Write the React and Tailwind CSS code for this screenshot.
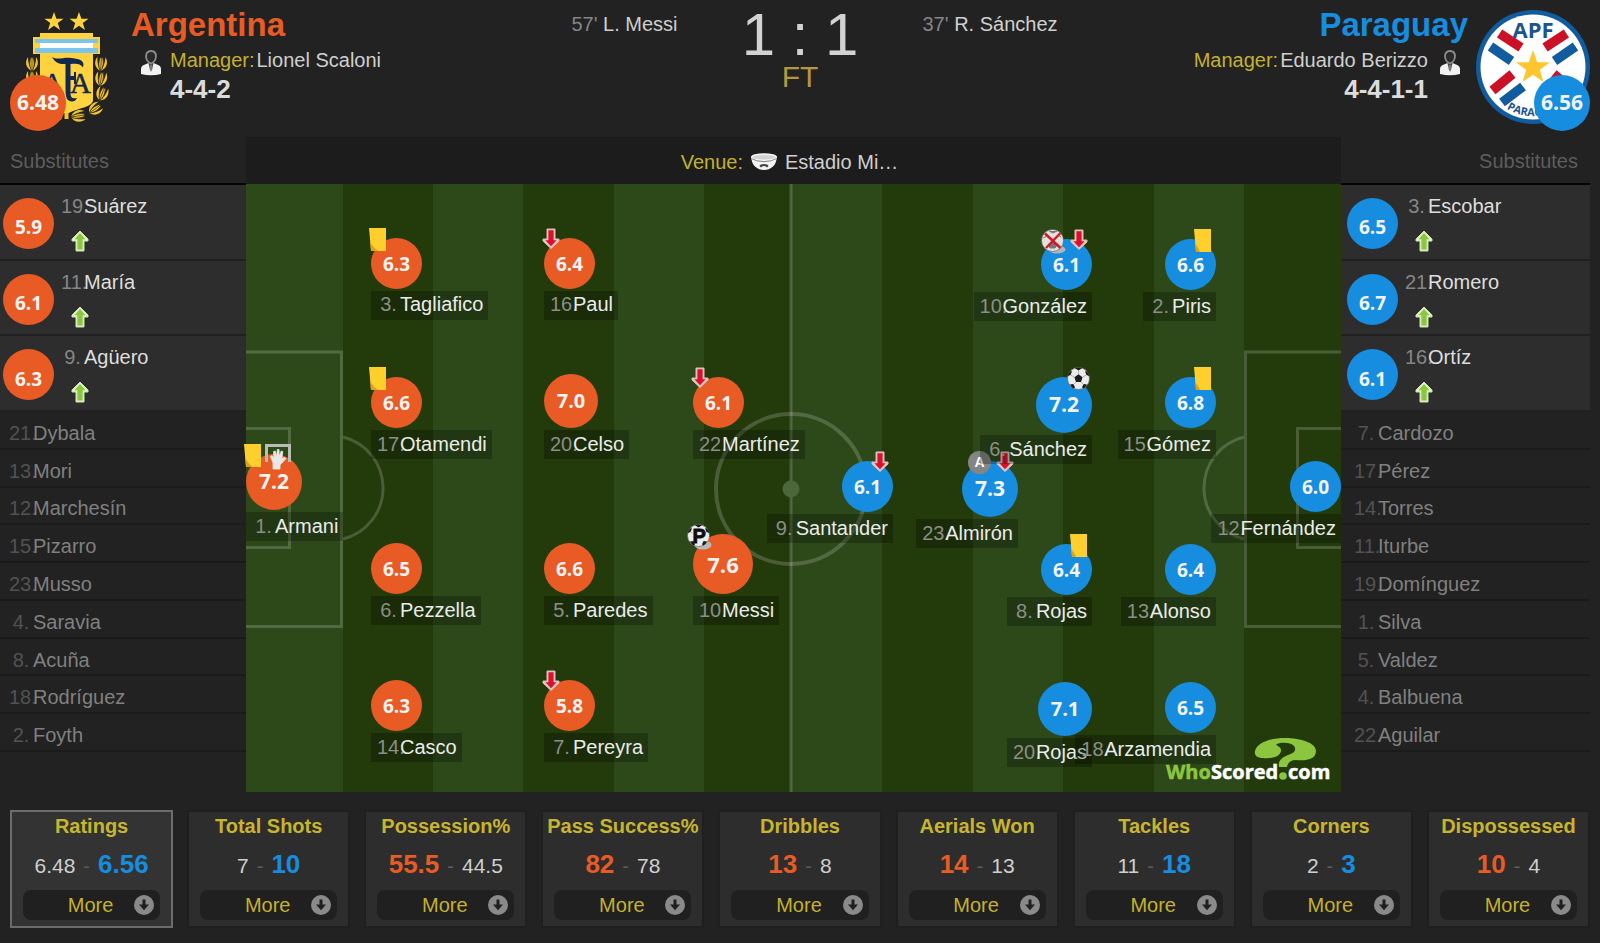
import { useState } from 'react';

const PITCH_W = 1095;
const PITCH_H = 608;

// x is measured from the own goal line, y from the top touch line
const homePlayers = [
  { n: 1, name: 'Armani', rating: '7.2', x: 0, y: 270, events: ['card', 'keeper'] },
  { n: 3, name: 'Tagliafico', rating: '6.3', x: 125, y: 54, events: ['card'] },
  { n: 17, name: 'Otamendi', rating: '6.6', x: 125, y: 193, events: ['card'] },
  { n: 6, name: 'Pezzella', rating: '6.5', x: 125, y: 359, events: [] },
  { n: 14, name: 'Casco', rating: '6.3', x: 125, y: 496, events: [] },
  { n: 16, name: 'Paul', rating: '6.4', x: 298, y: 54, events: ['off'] },
  { n: 20, name: 'Celso', rating: '7.0', x: 298, y: 190, events: [] },
  { n: 5, name: 'Paredes', rating: '6.6', x: 298, y: 359, events: [] },
  { n: 7, name: 'Pereyra', rating: '5.8', x: 298, y: 496, events: ['off'] },
  { n: 22, name: 'Martínez', rating: '6.1', x: 447, y: 193, events: ['off'] },
  { n: 10, name: 'Messi', rating: '7.6', x: 447, y: 350, events: ['penalty'] },
];

const awayPlayers = [
  { n: 12, name: 'Fernández', rating: '6.0', x: 0, y: 277, events: [] },
  { n: 9, name: 'Santander', rating: '6.1', x: 448, y: 277, events: ['off'] },
  { n: 23, name: 'Almirón', rating: '7.3', x: 323, y: 277, events: ['assist', 'off'] },
  { n: 10, name: 'González', rating: '6.1', x: 249, y: 55, events: ['missed', 'off'] },
  { n: 6, name: 'Sánchez', rating: '7.2', x: 249, y: 193, events: ['goal'] },
  { n: 8, name: 'Rojas', rating: '6.4', x: 249, y: 360, events: ['card'] },
  { n: 20, name: 'Rojas', rating: '7.1', x: 249, y: 498, events: [] },
  { n: 2, name: 'Piris', rating: '6.6', x: 125, y: 55, events: ['card'] },
  { n: 15, name: 'Gómez', rating: '6.8', x: 125, y: 193, events: ['card'] },
  { n: 13, name: 'Alonso', rating: '6.4', x: 125, y: 360, events: [] },
  { n: 18, name: 'Arzamendia', rating: '6.5', x: 125, y: 498, events: [] },
];

const homeSubs = [
  { n: 19, name: 'Suárez', rating: '5.9' },
  { n: 11, name: 'María', rating: '6.1' },
  { n: 9, name: 'Agüero', rating: '6.3' },
];

const awaySubs = [
  { n: 3, name: 'Escobar', rating: '6.5' },
  { n: 21, name: 'Romero', rating: '6.7' },
  { n: 16, name: 'Ortíz', rating: '6.1' },
];

const homeBench = [
  [21, 'Dybala'], [13, 'Mori'], [12, 'Marchesín'], [15, 'Pizarro'], [23, 'Musso'],
  [4, 'Saravia'], [8, 'Acuña'], [18, 'Rodríguez'], [2, 'Foyth'],
];

const awayBench = [
  [7, 'Cardozo'], [17, 'Pérez'], [14, 'Torres'], [11, 'Iturbe'], [19, 'Domínguez'],
  [1, 'Silva'], [5, 'Valdez'], [4, 'Balbuena'], [22, 'Aguilar'],
];

const stats = [
  { label: 'Ratings', home: '6.48', away: '6.56' },
  { label: 'Total Shots', home: '7', away: '10' },
  { label: 'Possession%', home: '55.5', away: '44.5' },
  { label: 'Pass Success%', home: '82', away: '78' },
  { label: 'Dribbles', home: '13', away: '8' },
  { label: 'Aerials Won', home: '14', away: '13' },
  { label: 'Tackles', home: '11', away: '18' },
  { label: 'Corners', home: '2', away: '3' },
  { label: 'Dispossessed', home: '10', away: '4' },
];

// Better ratings get a bigger circle
const circleSize = (rating) => {
  const r = Number(rating);
  if (r >= 7.5) return 'size-[60px] text-[22px]';
  if (r >= 7.2) return 'size-[56px] text-[21px]';
  if (r >= 7) return 'size-[54px] text-[20px]';
  return 'size-[51px] pt-0.5 text-[19px]';
};

/* ---------- Icons ---------- */

function CardIcon({ flip }) {
  return (
    <svg width="17" height="23" viewBox="0 0 17 23" className="shrink-0">
      <path d="M0 0H17V23H2Z" fill="#ffcf2e" />
      {flip
        ? <path d="M1.5 15Q5 20 6 23H2Z" fill="#d9a520" />
        : <path d="M1.5 15Q5 20 9 23H2Z" fill="#d9a520" />}
    </svg>
  );
}

function OffIcon() {
  return (
    <svg width="18" height="21" viewBox="0 0 18 21" className="shrink-0">
      <path d="M5 1H13V11H17V13L9 20.5L1 13V11H5Z" fill="#e3c9c6" stroke="#d8bdb8" strokeLinejoin="round" />
      <path d="M6.4 2.2H11.6V12.2H14.6L9 18.2L3.4 12.2H6.4Z" fill="#dc0f2c" />
    </svg>
  );
}

function OnIcon() {
  return (
    <svg width="18" height="22" viewBox="0 0 18 22">
      <path d="M9 1L17 9V11H13V21H5V11H1V9Z" fill="#dff0c8" stroke="#cde5b2" strokeLinejoin="round" />
      <path d="M9 3L14.5 9.2H11.6V19.4H6.4V9.2H3.5Z" fill="#8cc63f" />
    </svg>
  );
}

function KeeperIcon() {
  return (
    <svg width="26" height="26" viewBox="0 0 26 26" className="shrink-0">
      <path d="M1.5 18V1.5H24.5V18" fill="none" stroke="#b9bcb8" strokeWidth="3" />
      <path d="M8 25V19L5.5 12.5L7 11.5L9 14.5L8.5 7.5L10.2 7L11.6 12.5L12.3 5.5L14 5.5L14.3 12.5L16.2 7L17.8 7.5L16.8 14.5L19.5 13.5L21 14.5L15 21V25Z" fill="#e9e9e6" stroke="#e9e9e6" strokeWidth=".8" />
    </svg>
  );
}

function Ball() {
  return (
    <>
      <circle cx="11.5" cy="11.5" r="11" fill="#ececec" stroke="#555" strokeWidth=".6" />
      <path d="M11.5 7.2L15.6 10.2L14 15H9L7.4 10.2Z" fill="#1b1b1b" />
      <path d="M8 1.2L11.5 3.4L15 1.2Q11.5 0 8 1.2ZM.8 9L3.6 8L5 4.2L3.2 4.4Q1 6.5 .8 9ZM22.2 9L19.4 8L18 4.2L19.8 4.4Q22 6.5 22.2 9ZM3 17.5L6.5 17L8 20.5L6.5 21.4Q4 19.8 3 17.5ZM20 17.5L16.5 17L15 20.5L16.5 21.4Q19 19.8 20 17.5Z" fill="#1b1b1b" />
      <path d="M11.5 3.4V7.2M15.6 10.2L19.4 8M14 15L16.5 17.5M9 15L6.5 17.5M7.4 10.2L3.6 8" stroke="#999" strokeWidth=".7" />
    </>
  );
}

function GoalIcon() {
  return (
    <svg width="23" height="23" viewBox="0 0 23 23" className="shrink-0"><Ball /></svg>
  );
}

function MissedIcon() {
  return (
    <svg width="25" height="25" viewBox="0 0 25 25" className="shrink-0">
      <ellipse cx="16" cy="20.5" rx="8.5" ry="4" fill="#b5b5b5" />
      <circle cx="11.5" cy="11.5" r="11" fill="#e2e2dc" stroke="#555" strokeWidth=".6" />
      <path d="M8 2L12 4L16 2M2 9L6 7M20 8L17 6M7 16L11.5 13L16 16L14 19H9Z" fill="#777" stroke="#777" />
      <path d="M4 4.5L19.5 19M19.5 4L5 19" stroke="#d8142a" strokeWidth="2.4" />
    </svg>
  );
}

function PenaltyIcon() {
  return (
    <svg width="25" height="26" viewBox="0 0 25 26" className="shrink-0">
      <ellipse cx="16" cy="21" rx="8.5" ry="4.5" fill="#b9b9b9" />
      <Ball />
      <circle cx="12" cy="11.5" r="7" fill="#ececec" />
      <text x="5.5" y="19" fontSize="20" fontWeight="bold" fontFamily="Liberation Sans" fill="#0c0c0c" stroke="#0c0c0c" strokeWidth=".8">P</text>
    </svg>
  );
}

function AssistIcon() {
  return (
    <span className="flex size-[23px] shrink-0 items-center justify-center rounded-full bg-[#858585] text-[14px] font-bold text-white">
      A
    </span>
  );
}

function EventIcon({ type, away }) {
  if (type === 'card') return <CardIcon flip={away} />;
  if (type === 'off') return <OffIcon />;
  if (type === 'keeper') return <KeeperIcon />;
  if (type === 'goal') return <GoalIcon />;
  if (type === 'missed') return <MissedIcon />;
  if (type === 'penalty') return <PenaltyIcon />;
  return <AssistIcon />;
}

function ManagerIcon() {
  return (
    <svg width="20" height="26" viewBox="0 0 20 26" className="shrink-0">
      <path d="M0 24V19Q0 15.5 4 14.5L7.5 13L10 20L12.5 13L16 14.5Q20 15.5 20 19V24Q10 26.5 0 24Z" fill="#f2f2f2" />
      <path d="M7.5 13.5L10 22L12.5 13.5L11 15H9Z" fill="#4a4a4a" />
      <path d="M10 1Q15 1 15 6.5Q14.5 12 10 13.5Q5.5 12 5 6.5Q5 1 10 1Z" fill="#2a2a2a" stroke="#8c8c8c" strokeWidth="1.8" />
      <path d="M8.8 14.5H11.2L11.5 19L10 21L8.5 19Z" fill="#777" />
    </svg>
  );
}

function StadiumIcon() {
  return (
    <svg width="26" height="17" viewBox="0 0 26 17" className="shrink-0">
      <path d="M0 4Q1 11 4 13.5Q8 17 13 17Q18 17 22 13.5Q25 11 26 4Z" fill="#f4f4f4" />
      <ellipse cx="13" cy="4" rx="13" ry="3.8" fill="#f4f4f4" />
      <ellipse cx="13" cy="4.2" rx="11" ry="2.3" fill="#d2d2d2" />
      <path d="M.5 5.5Q5 8.6 13 8.6Q21 8.6 25.500 5.500" fill="none" stroke="#777" strokeWidth=".9" />
      <path d="M8.5 13Q9 11 13 11Q17 11 17.5 13L16 14.5Q15 13 13 13Q11 13 10 14.5Z" fill="#444" />
    </svg>
  );
}

function Leaf({ x, y, turn }) {
  return (
    <g transform={`translate(${x} ${y}) rotate(${turn})`}>
      <path d="M0 7C-7 4 -7 -3 -4 -7C-4 -2 -3 3 0 7Z" fill="#f3c32f" />
      <path d="M0 7C7 4 7 -3 4 -7C4 -2 3 3 0 7Z" fill="#f3c32f" />
      <path d="M0 7C-3 3 -2.5 -3 -1 -7C0 -5 0 -5 1 -7C2.5 -3 3 3 0 7Z" fill="#f3c32f" stroke="#3a3218" strokeWidth=".8" />
      <path d="M0 -5V7" stroke="#3a3218" strokeWidth=".7" />
    </g>
  );
}

function ArgentinaCrest() {
  const star = 'M0 -10L2.4 -3.2H9.5L3.8 1L6 8L0 3.8L-6 8L-3.8 1L-9.5 -3.2H-2.4Z';
  return (
    <svg width="100" height="116" viewBox="10 9 100 116" role="img" aria-label="Argentina crest">
      <path d={star} transform="translate(54 21)" fill="#ffd23f" />
      <path d={star} transform="translate(79 21)" fill="#ffd23f" />
      <Leaf x={32} y={63} turn={0} />
      <Leaf x={32} y={77} turn={0} />
      <Leaf x={31} y={91} turn={-10} />
      <Leaf x={38} y={104} turn={-40} />
      <Leaf x={56} y={115} turn={-80} />
      <Leaf x={101} y={63} turn={4} />
      <Leaf x={101} y={78} turn={10} />
      <Leaf x={102} y={93} turn={20} />
      <Leaf x={95} y={108} turn={55} />
      <Leaf x={78} y={115} turn={82} />
      <path d="M40 32H93V36H100V53H93V99C93 106 78 107 66.5 113C55 107 40 106 40 99V53H33V36H40Z" fill="#ffd23f" />
      <path d="M35 38H98V42H35ZM35 47H98V52H35Z" fill="#7cc4ea" />
      <path d="M40 42H93V47H40Z" fill="#fff" />
      <rect x="64.5" y="112" width="4" height="6" fill="#f3c32f" />
      <g fill="#12284c" stroke="#12284c" strokeWidth=".5" fontFamily="Liberation Serif">
        <text x="42" y="92" fontSize="29">A</text>
        <text x="70" y="92" fontSize="29">A</text>
      </g>
      <path d="M52 56C57 59.500 64 56 71 57C78 58 82 58 83.500 63L83 66.500C80 62 76 62.500 70.500 63V75H74V71H76V83H74V79H70.500V92C70.500 97 73 98 77 97C75 102 69 101 67 98C65.500 95 65.500 90 65.500 86V63C60 63.500 55 62 52 56Z" fill="#12284c" />
    </svg>
  );
}

function ParaguayCrest() {
  return (
    <svg width="114" height="114" viewBox="0 0 114 114" role="img" aria-label="Paraguay crest">
      <circle cx="57" cy="57" r="57" fill="#115c9f" />
      <circle cx="57" cy="57" r="52.5" fill="#fff" />
      <g strokeWidth="9.5" stroke="#cc1127">
        <path d="M23.6 23.5L45 37.5M90.4 23.5L69 37.5M16.5 80.5L36.5 64M97.5 80.5L77.5 64" />
      </g>
      <g strokeWidth="9.5" stroke="#115c9f">
        <path d="M14.5 36.5L35.5 51M99.5 36.5L78.5 51M26 92.5L47 76.5M88 92.5L67 76.5" />
      </g>
      <path d="M57 40L61.2 52.2H74L63.8 59.8L67.5 72L57 64.7L46.5 72L50.2 59.8L40 52.2H52.8Z" fill="#ffc62f" />
      <g fill="#1d548c" fontWeight="bold" fontFamily="Open Sans">
        <text x="57" y="28" fontSize="22" textAnchor="middle">APF</text>
        <path id="apf-arc" d="M29 97.5A49.5 49.5 0 0 0 85 97.5" fill="none" />
        <text fontSize="11"><textPath href="#apf-arc" startOffset="2">PARAGUAY</textPath></text>
      </g>
    </svg>
  );
}

function WhoScoredLogo() {
  return (
    <svg width="170" height="56" viewBox="0 0 170 56" className="absolute right-2 bottom-0" role="img" aria-label="WhoScored.com">
      <g fontFamily="Open Sans" fontWeight="bold" fontSize="20">
        <text x="3" y="43" fill="#8cc63f" stroke="#8cc63f" strokeWidth=".5">Who</text>
        <text x="48" y="43" fill="#fff" stroke="#fff" strokeWidth=".5">Scored</text>
        <text x="125" y="43" fill="#fff" stroke="#fff" strokeWidth=".5">com</text>
      </g>
      <path d="M122 2C138 2 153 7 153 15C153 24 142 25 133 24C128 24 125 26 124 31H116C115 25 118 22 125 19C131 17 134 14 131 10C128 6 118 6 114 8C111 10 119 10 118 15C117 21 108 23 100 22C94 22 91 19 92 15C94 7 107 2 122 2Z" fill="#8cc63f" />
      <circle cx="120" cy="40" r="3.8" fill="#8cc63f" />
    </svg>
  );
}

/* ---------- Pitch ---------- */

function PitchLines() {
  return (
    <svg viewBox={`0 0 ${PITCH_W} ${PITCH_H}`} className="absolute inset-0 size-full">
      <rect width={PITCH_W} height={PITCH_H} fill="#2d4819" />
      {[[97, 90], [277, 91], [458, 87], [636, 91], [817, 91], [998, 97]].map(([x, w]) => (
        <rect key={x} x={x} width={w} height={PITCH_H} fill="#233a0b" />
      ))}
      <g fill="none" stroke="#fff" strokeOpacity=".18" strokeWidth="3">
        <path d="M0 168H95.5V442.5H0M0 244.5H43.5V363.5H0" />
        <path d="M1095 168H999.5V442.5H1095M1095 244.5H1051.5V363.5H1095" />
        <path d="M97 253A52.5 52.5 0 0 1 97 355M998 253A52.5 52.5 0 0 0 998 355" />
        <path d="M545 0V608" />
        <circle cx="545" cy="305" r="75" strokeWidth="4" />
      </g>
      <circle cx="545" cy="305" r="8.5" fill="#4c683b" />
    </svg>
  );
}

function Player({ player, away }) {
  const { n, name, rating, x, y, events } = player;
  const place = { top: `${(y / PITCH_H) * 100}%`, [away ? 'right' : 'left']: `${(x / PITCH_W) * 100}%` };
  return (
    <div className={`absolute flex flex-col gap-0.5 ${away ? 'items-end' : 'items-start'}`} style={place}>
      <div className="relative">
        <div className={`flex items-center justify-center rounded-full font-['Open_Sans',sans-serif] font-bold text-[#f3f3f3] ${circleSize(rating)} ${away ? 'bg-[#178de0]' : 'bg-[#e85b25]'}`}>
          {rating}
        </div>
        {events.length > 0 && (
          <div className={`absolute -top-[10px] flex ${away ? 'right-px' : '-left-[6px]'}`}>
            {events.map((type) => (
              <span key={type} className="flex w-[25px] items-start justify-center">
                <EventIcon type={type} away={away} />
              </span>
            ))}
          </div>
        )}
      </div>
      <div className="flex h-[29px] items-center bg-black/25 pr-[5px] pb-0.5 pl-1.5 whitespace-nowrap">
        <span className="w-[23px] text-center text-[#8b8f86]">{n}.</span>
        <span className="relative text-[#ebebeb]">{name}</span>
      </div>
    </div>
  );
}

/* ---------- Side columns ---------- */

function SubsColumn({ subs, bench, away }) {
  return (
    <aside className={away ? 'w-[259px] shrink-0 pr-[10px]' : 'w-[246px] shrink-0'}>
      <h2 className={`flex h-12 items-center border-b-2 border-[#050505] pt-0.5 text-[#5d5d5d] ${away ? 'justify-end pr-3' : 'pl-[10px]'}`}>
        Substitutes
      </h2>
      <ul className="flex h-[227px] flex-col">
        {subs.map(({ n, name, rating }) => (
          <li key={n} className={`flex flex-1 border-b-2 border-[#202020] bg-[#2d2d2d] ${away ? 'pl-1.5' : 'pl-[3px]'}`}>
            <div className={`mt-[13px] flex size-[51px] items-center justify-center rounded-full pt-2 font-['Open_Sans',sans-serif] text-[19px] font-bold text-[#f3f3f3] ${away ? 'bg-[#178de0]' : 'bg-[#e85b25]'}`}>
              {rating}
            </div>
            <div className="pt-[9px] pl-[7px]">
              <div className="flex leading-6 whitespace-nowrap">
                <span className="w-[23px] text-center text-[#868686]">{n}.</span>
                <span className="relative text-[#dedede]">{name}</span>
              </div>
              <div className="pt-3 pl-[10px]"><OnIcon /></div>
            </div>
          </li>
        ))}
      </ul>
      <ul className="flex h-[340px] flex-col">
        {bench.map(([n, name]) => (
          <li key={n} className={`flex flex-1 items-center border-b-2 border-[#1b1b1b] pt-1.5 leading-6 whitespace-nowrap ${away ? 'pl-[13px]' : 'pl-[9px]'}`}>
            <span className="w-6 text-center text-[#525252]">{n}.</span>
            <span className="relative text-[#808080]">{name}</span>
          </li>
        ))}
      </ul>
    </aside>
  );
}

/* ---------- Header ---------- */

function TeamHeader({ team, manager, formation, rating, away, crest }) {
  return (
    <div className={`flex flex-1 ${away ? 'flex-row-reverse' : ''}`}>
      <div className={`relative shrink-0 pt-[10px] ${away ? 'mr-[10px]' : 'ml-[10px] w-[121px]'}`}>
        {crest}
        <div className={`absolute top-[75px] flex size-[56px] items-center justify-center rounded-full font-['Open_Sans',sans-serif] text-[21px] font-bold text-[#f3f3f3] ${away ? 'right-0 bg-[#178de0]' : 'left-0 bg-[#e85b25]'}`}>
          {rating}
        </div>
      </div>
      <div className={away ? 'pr-2 text-right' : ''}>
        <h1 className={`pt-1 text-[33px] leading-[42px] font-bold ${away ? 'text-[#178de0]' : 'text-[#e85b25]'}`}>{team}</h1>
        <div className={`flex ${away ? 'flex-row-reverse gap-3 pr-2' : 'gap-[9px] pl-[10px]'}`}>
          <div className="pt-1"><ManagerIcon /></div>
          <div>
            <p className="flex gap-0.5 leading-[29px] whitespace-nowrap">
              <span className="text-[#c4b12f]">Manager:</span>
              <span className="text-[#cfcfcf]">{manager}</span>
            </p>
            <p className="text-[26px] leading-[29px] font-bold text-[#dcdcdc]">{formation}</p>
          </div>
        </div>
      </div>
    </div>
  );
}

function Scorer({ minute, name }) {
  return (
    <p className="w-[160px] shrink-0 pt-3 leading-6 whitespace-nowrap first:text-right">
      <span className="text-[#858585]">{minute}'</span> <span className="text-[#cfcfcf]">{name}</span>
    </p>
  );
}

/* ---------- Stats ---------- */

function StatCard({ label, home, away, active, onMore }) {
  const homeWins = Number(home) > Number(away);
  const strong = 'text-[26px] font-bold';
  const weak = 'text-[21px] text-[#cfcfcf]';
  return (
    <section className={`min-w-0 border-2 px-[11px] pb-1.5 ${active ? 'border-[#6c6c6c] bg-[#333333]' : 'border-[#1f1f1f] bg-[#2d2d2d]'}`}>
      <h3 className="flex justify-center leading-7 font-bold whitespace-nowrap text-[#c8b52f]">{label}</h3>
      <p className="flex h-12 items-baseline justify-center gap-2 leading-[48px]">
        <span className={homeWins ? `${strong} text-[#e85b25]` : weak}>{home}</span>
        <span className="text-[#5c5c5c]">-</span>
        <span className={homeWins ? weak : `${strong} text-[#178de0]`}>{away}</span>
      </p>
      <button type="button" onClick={onMore} className="mt-0.5 flex h-[30px] w-full items-center rounded-lg bg-[#202020] pr-1.5 text-[#c4b12f]">
        <span className="flex-1 pl-6 text-center">More</span>
        <svg width="20" height="20" viewBox="0 0 20 20" className="shrink-0">
          <circle cx="10" cy="10" r="10" fill="#8a8a8a" />
          <path d="M8.5 4.5H11.5V9.5H15L10 15.2L5 9.5H8.5Z" fill="#202020" />
        </svg>
      </button>
    </section>
  );
}

export default function App() {
  const [activeStat, setActiveStat] = useState('Ratings');

  return (
    <div className="min-h-screen bg-[#222222] font-['Liberation_Sans',Arial,sans-serif] text-[20px]">
      <header className="flex h-[137px]">
        <TeamHeader team="Argentina" manager="Lionel Scaloni" formation="4-4-2" rating="6.48" crest={<ArgentinaCrest />} />
        <div className="flex shrink-0">
          <Scorer minute={57} name="L. Messi" />
          <div className="w-[245px] text-center">
            <p className="text-[60px] leading-[70px] text-[#d2d2d2]">1 : 1</p>
            <p className="text-[30px] leading-[14px] text-[#b6963f]">FT</p>
          </div>
          <Scorer minute={37} name="R. Sánchez" />
        </div>
        <TeamHeader team="Paraguay" manager="Eduardo Berizzo" formation="4-4-1-1" rating="6.56" away crest={<ParaguayCrest />} />
      </header>

      <main className="flex">
        <SubsColumn subs={homeSubs} bench={homeBench} />
        <div className="min-w-0 flex-1">
          <div className="flex h-[47px] items-center justify-center gap-2 bg-[#1c1c1c] pt-0.5 pr-2 whitespace-nowrap">
            <span className="text-[#c4b12f]">Venue:</span>
            <StadiumIcon />
            <a href="#venue" className="text-[#cfcfcf]">Estadio Mi…</a>
          </div>
          <div className="relative aspect-[1095/608]">
            <PitchLines />
            <WhoScoredLogo />
            {homePlayers.map((p) => <Player key={p.n} player={p} />)}
            {awayPlayers.map((p) => <Player key={p.n} player={p} away />)}
          </div>
        </div>
        <SubsColumn subs={awaySubs} bench={awayBench} away />
      </main>

      <div className="grid grid-cols-9 gap-[14px] px-[10px] pt-[18px]">
        {stats.map((s) => (
          <StatCard key={s.label} {...s} active={s.label === activeStat} onMore={() => setActiveStat(s.label)} />
        ))}
      </div>
    </div>
  );
}
